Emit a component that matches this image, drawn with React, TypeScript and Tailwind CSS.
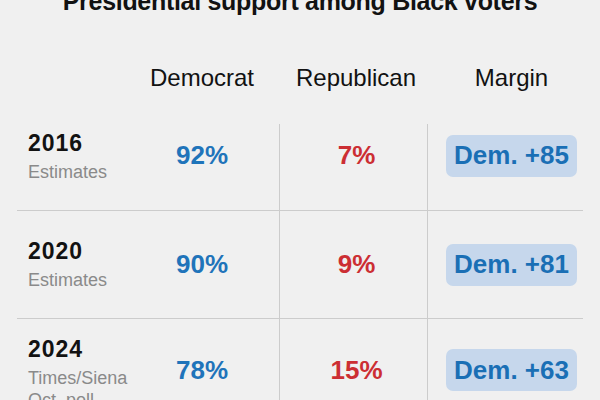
import React from "react";

const font = { fontFamily: '"Liberation Sans", Arial, sans-serif' };

type Row = {
  year: string;
  sub: string[];
  dem: string;
  rep: string;
  margin: string;
};

const rows: Row[] = [
  { year: "2016", sub: ["Estimates"], dem: "92%", rep: "7%", margin: "Dem. +85" },
  { year: "2020", sub: ["Estimates"], dem: "90%", rep: "9%", margin: "Dem. +81" },
  { year: "2024", sub: ["Times/Siena", "Oct. poll"], dem: "78%", rep: "15%", margin: "Dem. +63" },
];

export default function App() {
  return (
    <div
      className="w-[600px] h-[400px] overflow-hidden bg-[#f0f0f0] text-[#121212]"
      style={font}
    >
      <div className="-mt-[14px] h-[30px] text-center text-[25px] leading-[30px] font-bold tracking-[-0.3px] text-[#121212]">
        Presidential support among Black voters
      </div>
      <div className="px-[17px]">
        {/* header */}
        <div className="flex h-[87px] pt-[50px] text-[24px] leading-[24px]">
          <div className="w-[108px]" />
          <div className="w-[154px] text-center">Democrat</div>
          <div className="w-[148px] pl-[6px] text-center">Republican</div>
          <div className="w-[156px] pl-[19px]">
            <div className="w-[131px] text-center">Margin</div>
          </div>
        </div>
        {rows.map((r, i) => {
          const first = i === 0;
          const last = i === rows.length - 1;
          const vcell = first
            ? "mt-[21px] pb-[23px] border-l border-[#cccccc]"
            : last
            ? "pb-[6px] border-l border-[#cccccc]"
            : "border-l border-[#cccccc]";
          return (
            <div
              key={r.year}
              className={
                "flex h-[108px] items-stretch " +
                (last ? "" : "border-b border-[#cccccc]")
              }
            >
              <div className="w-[108px] pl-[11px] flex flex-col justify-center">
                <div className="text-[23px] leading-[26px] font-bold tracking-[1px] text-[#121212]">
                  {r.year}
                </div>
                <div className="mt-[5px] text-[18px] leading-[22px] text-[#8a8a8a]">
                  {r.sub.map((s) => (
                    <div key={s} className="whitespace-nowrap">
                      {s}
                    </div>
                  ))}
                </div>
              </div>
              <div
                className={
                  "w-[154px] flex items-center justify-center text-[26px] font-bold text-[#1f74ba] " +
                  (first ? "pb-[2px]" : last ? "pb-[6px]" : "")
                }
              >
                {r.dem}
              </div>
              <div
                className={
                  "w-[148px] pl-[6px] flex items-center justify-center text-[26px] font-bold text-[#cc2e33] " +
                  vcell
                }
              >
                {r.rep}
              </div>
              <div className={"w-[156px] pl-[18px] flex items-center " + vcell}>
                <div className="w-[131px] h-[42px] rounded-[7px] bg-[#c6d7ec] flex items-center justify-center text-[26px] font-bold text-[#1a6fb5] whitespace-nowrap">
                  {r.margin}
                </div>
              </div>
            </div>
          );
        })}
      </div>
    </div>
  );
}
